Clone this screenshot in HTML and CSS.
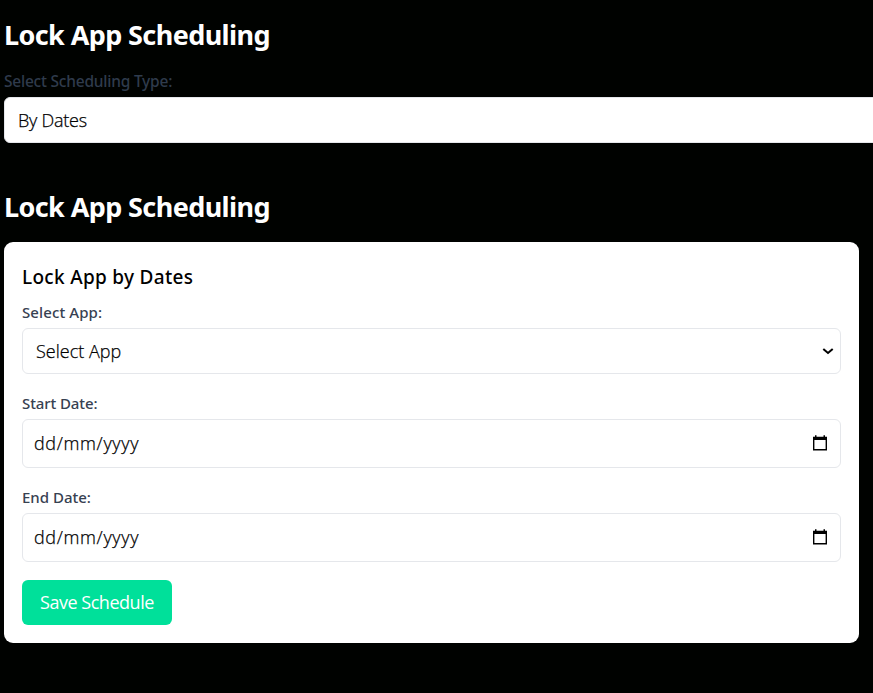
FILE: index.html
```html
<!DOCTYPE html>
<html lang="en">
<head>
<meta charset="utf-8">
<title>Lock App Scheduling</title>
<link rel="stylesheet" href="styles.css">
</head>
<body>
<main class="page">
  <h1 class="title"><span class="t-title">Lock App Scheduling</span></h1>
  <div class="type-label"><span class="t-type">Select Scheduling Type:</span></div>
  <div class="control type-select"><span class="t-by">By Dates</span></div>
  <h1 class="title second"><span class="t-title">Lock App Scheduling</span></h1>
  <section class="card">
    <h2 class="card-title"><span class="t-card">Lock App by Dates</span></h2>
    <div class="label"><span class="t-app">Select App:</span></div>
    <div class="control select"><span class="t-select">Select App</span>
      <svg class="chevron" width="12" height="8" viewBox="0 0 12 8"><path d="M1.300 2 6 6l4.700-4" fill="none" stroke="#000" stroke-width="2"/></svg>
    </div>
    <div class="label"><span class="t-start">Start Date:</span></div>
    <div class="control date"><span class="t-date">dd/mm/yyyy</span>
      <svg class="calendar" width="16" height="17" viewBox="0 0 16 17"><path d="M1.700 3h12.600v11.800H1.700z" fill="none" stroke="#000" stroke-width="1.400"/><path d="M1 1.800h14v3.200H1zM3 .200h1.500v2H3zM11.500.200H13v2h-1.500z"/></svg>
    </div>
    <div class="label"><span class="t-end">End Date:</span></div>
    <div class="control date"><span class="t-date">dd/mm/yyyy</span>
      <svg class="calendar" width="16" height="17" viewBox="0 0 16 17"><path d="M1.700 3h12.600v11.800H1.700z" fill="none" stroke="#000" stroke-width="1.400"/><path d="M1 1.800h14v3.200H1zM3 .200h1.500v2H3zM11.500.200H13v2h-1.500z"/></svg>
    </div>
    <button class="save"><span class="t-save">Save Schedule</span></button>
  </section>
</main>
</body>
</html>
```
FILE: styles.css
```css
* { box-sizing: border-box; }
body { margin: 0; background: #000200; font: 300 18px/27px "Open Sans", "Noto Sans", sans-serif; color: #000; overflow: hidden; }
.page { padding: 17px 14px 0 4px; }
span { display: inline-block; white-space: nowrap; }
.title { margin: 0; font: 700 27px/36px "Noto Sans", sans-serif; letter-spacing: -.6px; color: #fff; }
.type-label { margin-top: 15px; height: 29px; font: 500 15.500px/26px "Noto Sans", sans-serif; letter-spacing: -.22px; color: #2f3b4c; }
.control { display: flex; align-items: center; justify-content: space-between; background: #fff; border: 1px solid #e5e7eb; border-radius: 6px; -webkit-text-stroke: .25px #000; }
.type-select { height: 46px; width: 900px; padding: 0 13px; }
.second { margin-top: 46px; }
.card { margin-top: 17px; height: 401px; background: #fff; border-radius: 9px; padding: 21px 18px 18px; }
.card-title { margin: 0; font: 500 19px/28px "Noto Sans", sans-serif; letter-spacing: .3px; }
.label { font: 500 15px/22px "Noto Sans", sans-serif; color: #374151; margin: 10px 0 5px; }
.t-app { letter-spacing: .1px; }
.t-start { letter-spacing: -.1px; }
.t-by { letter-spacing: -.25px; }
.t-date { letter-spacing: .65px; }
.card .control { margin-bottom: 18px; }
.select { height: 46px; padding: 0 6px 0 13px; }
.date { height: 49px; padding: 0 12px 0 11px; }
.save { display: block; width: 150px; height: 45px; border: 0; border-radius: 6px; padding: 0 18px; background: #00e09a; color: #fff; font: 400 18px/27px "Open Sans", sans-serif; letter-spacing: -.47px; text-align: left; }
```
